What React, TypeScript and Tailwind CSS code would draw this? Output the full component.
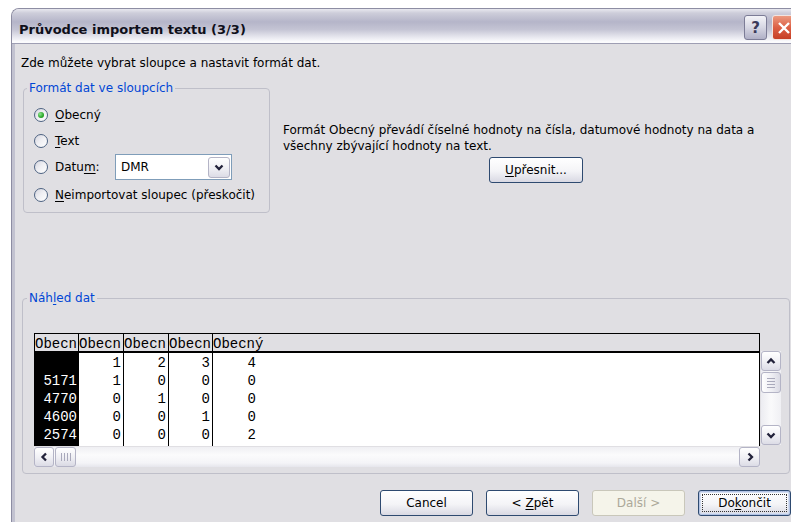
import type { ReactNode } from "react";
import clsx from "clsx";

type Dir = "up" | "down" | "left" | "right";

const previewRows = [
  ["", "1", "2", "3", "4"],
  ["5171", "1", "0", "0", "0"],
  ["4770", "0", "1", "0", "0"],
  ["4600", "0", "0", "1", "0"],
  ["2574", "0", "0", "0", "2"],
];

const columnWidths = ["w-[44px]", "w-[45px]", "w-[45px]", "w-[44px]", "w-[45px]"];
const headerLabels = ["Obecn", "Obecn", "Obecn", "Obecn", "Obecný"];

function Key({ children }: { children: ReactNode }) {
  return <span className="underline decoration-1 underline-offset-[2px]">{children}</span>;
}

function Chevron({ dir }: { dir: Dir }) {
  const points = {
    up: "1.5,7 5,3.5 8.5,7",
    down: "1.5,3.5 5,7 8.5,3.5",
    left: "7,1.5 3.5,5 7,8.5",
    right: "3.5,1.5 7,5 3.5,8.5",
  }[dir];
  return (
    <svg width="10" height="10" viewBox="0 0 10 10">
      <polyline points={points} fill="none" stroke="#22223a" strokeWidth="2.3" />
    </svg>
  );
}

function ScrollButton({ dir, className }: { dir: Dir; className?: string }) {
  return (
    <div
      className={clsx(
        "flex shrink-0 items-center justify-center rounded-[3px] border border-[#b4b4c6] bg-[linear-gradient(180deg,#ffffff_0%,#f1f1f5_50%,#dcdce6_100%)]",
        className
      )}
    >
      <Chevron dir={dir} />
    </div>
  );
}

function Radio({ checked }: { checked?: boolean }) {
  return (
    <span className="flex h-[14px] w-[14px] shrink-0 items-center justify-center rounded-full border border-[#4e6382] bg-[linear-gradient(135deg,#d4d4de_0%,#eeeef2_45%,#ffffff_100%)]">
      {checked && (
        <span className="h-[6px] w-[6px] rounded-full bg-[radial-gradient(circle_at_35%_35%,#8de48d_0%,#2aa82a_60%,#1b861b_100%)]" />
      )}
    </span>
  );
}

function PushButton({
  children,
  disabled,
  isDefault,
  className,
}: {
  children: ReactNode;
  disabled?: boolean;
  isDefault?: boolean;
  className?: string;
}) {
  return (
    <div
      className={clsx(
        "flex h-[26px] shrink-0 items-center justify-center rounded-[3px] border",
        disabled
          ? "border-[#c9c7ba] bg-[#f5f4ea] text-[#aca899]"
          : "border-[#2e4a70] bg-[linear-gradient(180deg,#ffffff_0%,#f4f4f7_55%,#d9d9e3_100%)]",
        isDefault && "shadow-[inset_0_0_0_1px_#b3c3e4,inset_0_0_0_2px_#d3ddf0]",
        className
      )}
    >
      {isDefault ? (
        <span className="flex h-[18px] w-[85px] items-center justify-center border border-dotted border-[#333]">
          {children}
        </span>
      ) : (
        children
      )}
    </div>
  );
}

export default function App() {
  return (
    <div className="h-[522px] w-[791px] overflow-hidden bg-white pl-[11px] pt-[8px] font-['DejaVu_Sans',sans-serif] text-[12px] leading-[16px] text-black">
      <div className="flex h-[520px] w-[789px] flex-col overflow-hidden rounded-t-[8px] border-l border-t border-[#8d8da3] bg-[#e0dfe3]">
        {/* caption bar */}
        <div className="flex h-[35px] shrink-0 border-b border-[#9e9eb3] bg-[linear-gradient(180deg,#e8e8ef_0%,#cdcdda_12%,#b5b5c9_38%,#c4c4d4_60%,#e6e6ee_82%,#fbfbfd_96%)] pl-[7px] pr-[4px]">
          <div className="pt-[13px] text-[13px] font-bold leading-[16px] text-[#0f0f1a]">
            Průvodce importem textu (3/3)
          </div>
          <div className="ml-auto flex gap-[5px] pt-[6px]">
            <div className="flex h-[25px] w-[23px] items-center justify-center rounded-[3px] border border-[#7c7c96] bg-[linear-gradient(180deg,#f4f4f8_0%,#d6d6e3_50%,#b0b0c6_100%)] text-[15px] font-bold text-[#3a3a5a]">
              ?
            </div>
            <div className="flex h-[25px] w-[24px] items-center justify-center rounded-[3px] border border-[#f2e4e0] bg-[linear-gradient(180deg,#ec9a80_0%,#dc5f44_50%,#c63f25_100%)]">
              <svg width="14" height="14" viewBox="0 0 14 14">
                <path d="M2 2L12 12M12 2L2 12" stroke="#ffffff" strokeWidth="2.4" />
              </svg>
            </div>
          </div>
        </div>

        {/* dialog body */}
        <div className="flex flex-1 flex-col border-l-[3px] border-[#c2c2d0]">
          <div className="pl-[6px] pt-[11px]">Zde můžete vybrat sloupce a nastavit formát dat.</div>

          <div className="mt-[9px] flex items-start pl-[8px]">
            <fieldset className="w-[247px] rounded-[4px] border border-[#bfbfc9] pb-[7px] pl-[3px] pt-[9px]">
              <legend className="px-[2px] text-[#0046d5]">Formát dat ve sloupcích</legend>
              <div className="ml-[7px] flex flex-col">
                <div className="flex h-[20px] items-center gap-[7px]">
                  <Radio checked />
                  <span>
                    <Key>O</Key>becný
                  </span>
                </div>
                <div className="mt-[6px] flex h-[20px] items-center gap-[7px]">
                  <Radio />
                  <span>
                    <Key>T</Key>ext
                  </span>
                </div>
                <div className="mt-[3px] flex h-[26px] items-center gap-[7px]">
                  <Radio />
                  <span className="w-[53px]">
                    Datu<Key>m</Key>:
                  </span>
                  <div className="flex h-[26px] w-[117px] items-center border border-[#7f9db9] bg-white">
                    <span className="pl-[5px]">DMR</span>
                    <ScrollButton dir="down" className="ml-auto mr-[1px] h-[21px] w-[22px]" />
                  </div>
                </div>
                <div className="mt-[5px] flex h-[20px] items-center gap-[7px]">
                  <Radio />
                  <span>
                    <Key>N</Key>eimportovat sloupec (přeskočit)
                  </span>
                </div>
              </div>
            </fieldset>

            <div className="ml-[13px] mt-[42px] flex w-[506px] flex-col">
              <p>
                Formát Obecný převádí číselné hodnoty na čísla, datumové hodnoty na data a
                <br />
                všechny zbývající hodnoty na text.
              </p>
              <PushButton className="mx-auto mt-[3px] w-[94px]">
                <span>
                  <Key>U</Key>přesnit...
                </span>
              </PushButton>
            </div>
          </div>

          <div className="mt-[77px] pl-[7px]">
            <fieldset className="w-[768px] rounded-[4px] border border-[#bfbfc9] pb-[6px] pl-[4px] pt-[27px]">
              <legend className="px-[2px] text-[#0046d5]">
                Náh<Key>l</Key>ed dat
              </legend>
              <div className="ml-[7px] flex font-['Liberation_Mono',monospace] text-[14px]">
                <div className="flex w-[726px] flex-col">
                  {/* column headers */}
                  <div className="flex h-[20px] border-x border-b-2 border-t border-black">
                    {headerLabels.map((label, i) => (
                      <div
                        key={i}
                        className={clsx(
                          "h-full whitespace-nowrap pt-[4px] leading-[12px]",
                          i < 4 ? clsx(columnWidths[i], "border-r border-black") : "flex-1"
                        )}
                      >
                        {label}
                      </div>
                    ))}
                  </div>
                  {/* preview rows */}
                  <div className="flex h-[93px] border-x border-black bg-white">
                    {columnWidths.map((w, col) => (
                      <div
                        key={col}
                        className={clsx(
                          "flex h-full flex-col pt-[1px] text-right",
                          w,
                          col < 4 && "border-r border-black",
                          col === 0 ? "bg-black pr-[1px] text-white" : "pr-[2px]"
                        )}
                      >
                        {previewRows.map((row, r) => (
                          <div key={r} className="h-[18px] leading-[18px]">
                            {row[col]}
                          </div>
                        ))}
                      </div>
                    ))}
                  </div>
                  {/* horizontal scroll bar */}
                  <div className="mt-[1px] flex h-[20px] bg-[linear-gradient(180deg,#efeff3_0%,#fbfbfc_40%,#f4f4f7_80%,#e6e6ec_100%)]">
                    <ScrollButton dir="left" className="w-[20px]" />
                    <div className="ml-[1px] flex w-[21px] items-center justify-center gap-[2px] rounded-[3px] border border-[#b4b4c6] bg-[linear-gradient(180deg,#ffffff_0%,#eeeef3_55%,#dadae4_100%)]">
                      {[0, 1, 2, 3].map((n) => (
                        <span key={n} className="h-[8px] w-px bg-[#a9a9bb]" />
                      ))}
                    </div>
                    <ScrollButton dir="right" className="ml-auto w-[21px]" />
                  </div>
                </div>

                {/* vertical scroll bar */}
                <div className="ml-[1px] mt-[18px] flex h-[94px] w-[20px] flex-col bg-[linear-gradient(90deg,#ececf1_0%,#fafafb_50%,#f0f0f4_100%)]">
                  <ScrollButton dir="up" className="h-[20px]" />
                  <div className="mt-[1px] flex h-[21px] flex-col items-center justify-center gap-[2px] rounded-[3px] border border-[#b4b4c6] bg-[linear-gradient(90deg,#ffffff_0%,#eeeef3_55%,#dadae4_100%)]">
                    {[0, 1, 2, 3].map((n) => (
                      <span key={n} className="h-px w-[8px] bg-[#a9a9bb]" />
                    ))}
                  </div>
                  <ScrollButton dir="down" className="mt-auto h-[20px]" />
                </div>
              </div>
            </fieldset>
          </div>

          <div className="mt-[16px] flex justify-end gap-[13px] pr-[9px]">
            <PushButton className="w-[93px]">Cancel</PushButton>
            <PushButton className="w-[93px]">
              <span>
                &lt; <Key>Z</Key>pět
              </span>
            </PushButton>
            <PushButton disabled className="w-[93px]">
              Další &gt;
            </PushButton>
            <PushButton isDefault className="w-[93px]">
              <span>
                Do<Key>k</Key>ončit
              </span>
            </PushButton>
          </div>
        </div>
      </div>
    </div>
  );
}
